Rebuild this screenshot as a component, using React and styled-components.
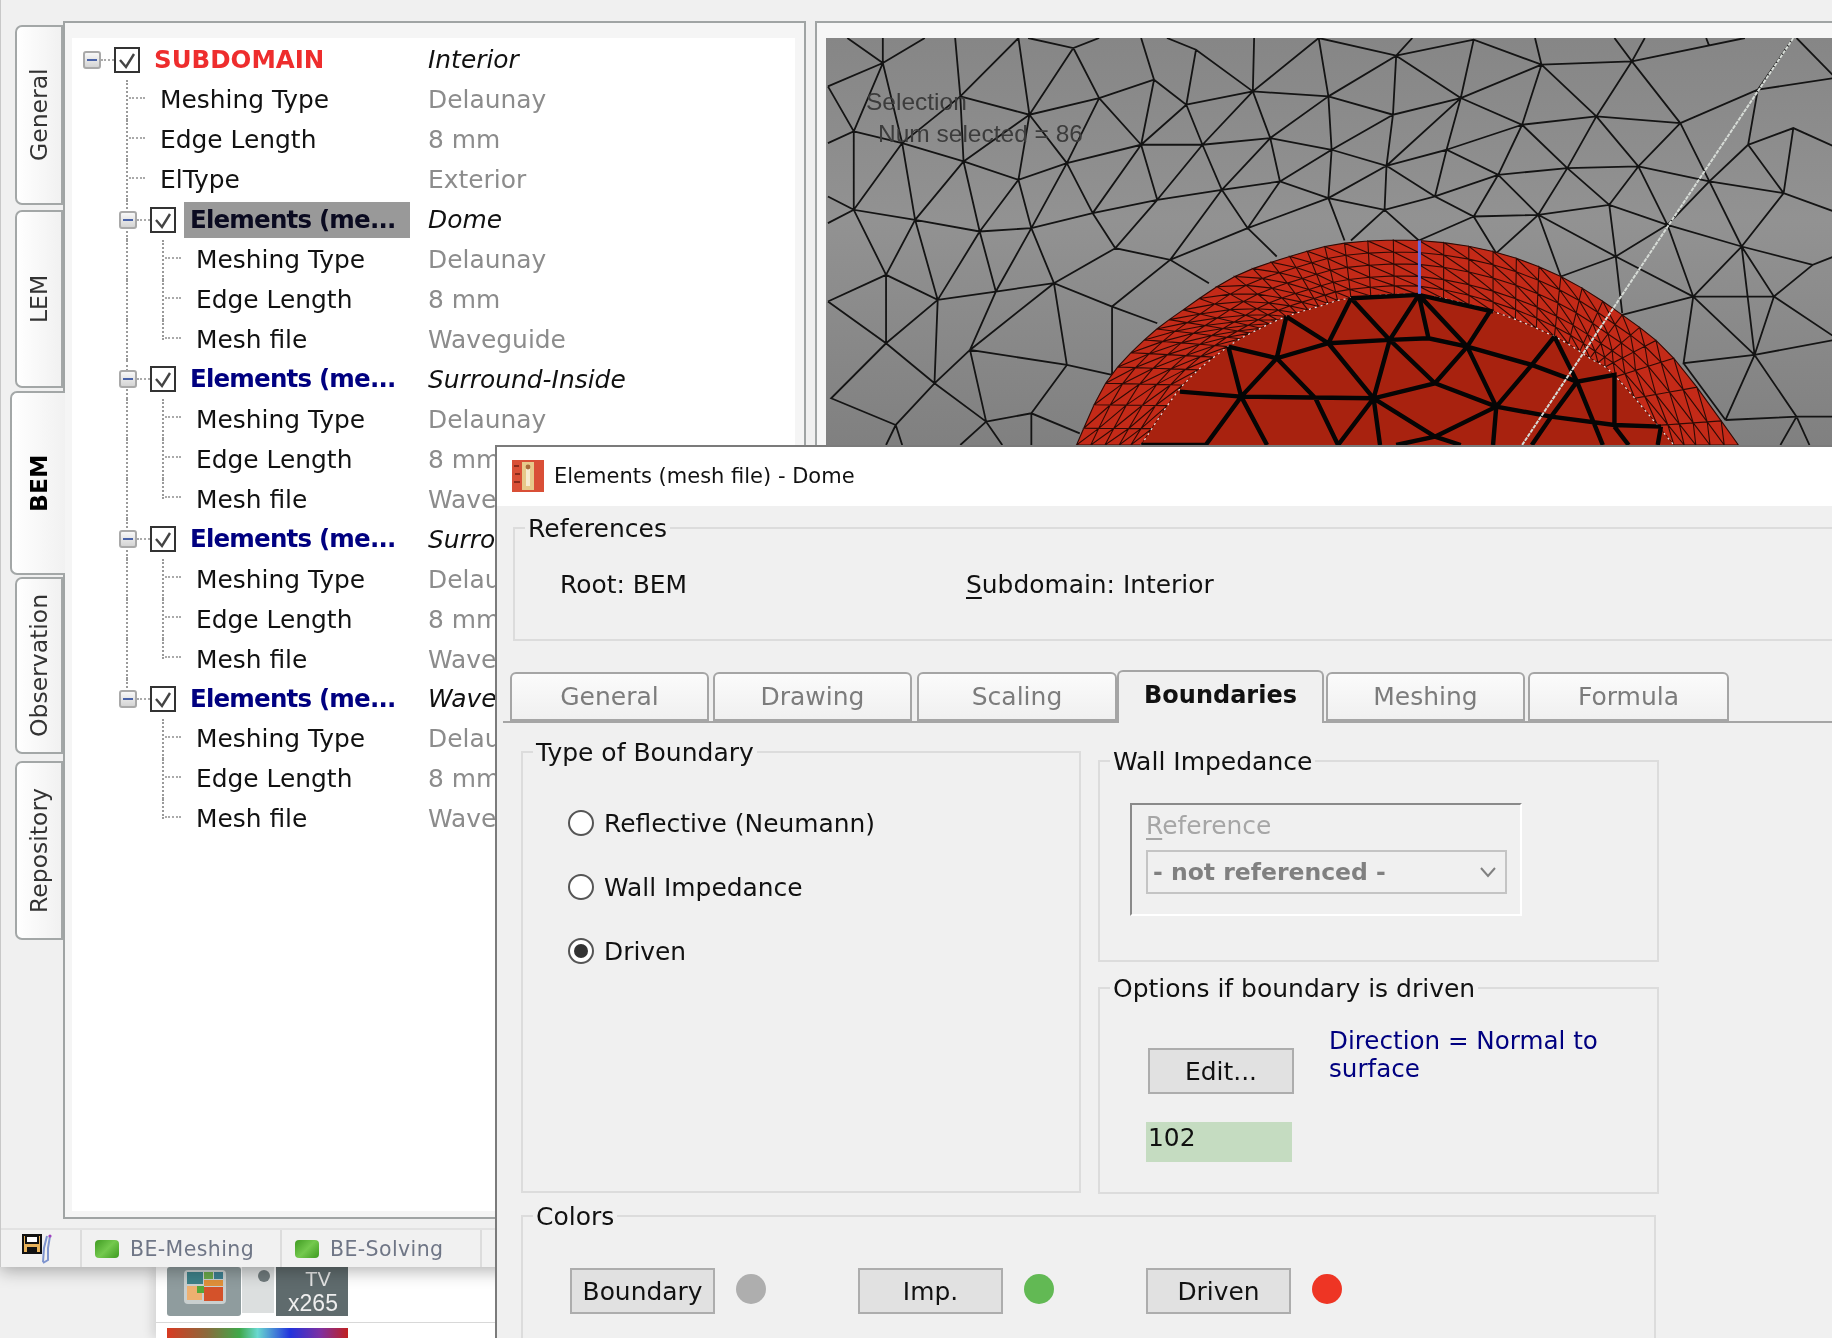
import styled, { createGlobalStyle } from "styled-components";

const GlobalStyle = createGlobalStyle`
  html, body { margin: 0; padding: 0; background: #f0f0f0; }
  body { font-family: "DejaVu Sans", "Liberation Sans", sans-serif; font-size: 24.9px; color: #111; }
`;

const Page = styled.div`
  position: relative;
  width: 1832px;
  height: 1338px;
  overflow: hidden;
  background: #f0f0f0;
  filter: blur(0.45px);
`;

/* main window behind the dialog */
const MainWindow = styled.div`
  position: relative;
  z-index: 1;
  height: 1267px;
  box-sizing: border-box;
  display: flex;
  flex-direction: column;
  background: #f0f0f0;
  border-left: 1px solid #c8c8c8;
  box-shadow: 0 4px 16px rgba(0, 0, 0, 0.3);
`;
const Body = styled.div`
  display: flex;
  height: 1200px;
  margin-top: 21px;
`;
const SideTabs = styled.div`
  width: 62px;
  flex: none;
  padding-top: 4px;
  display: flex;
  flex-direction: column;
  align-items: flex-end;
`;
const SideTab = styled.div`
  box-sizing: border-box;
  position: relative;
  z-index: ${(p) => (p.$active ? 2 : 0)};
  width: ${(p) => (p.$active ? "55px" : "48px")};
  height: ${(p) => p.$h}px;
  margin-top: ${(p) => p.$gap}px;
  margin-right: ${(p) => (p.$active ? "-2px" : "0")};
  display: flex;
  align-items: center;
  justify-content: center;
  writing-mode: vertical-rl;
  transform: rotate(180deg);
  font-size: 23.5px;
  font-weight: ${(p) => (p.$active ? 700 : 400)};
  color: ${(p) => (p.$active ? "#000" : "#333")};
  background: linear-gradient(to left, #ffffff, #f1f1f1);
  border: 2px solid #a3a7a7;
  border-left: ${(p) => (p.$active ? "none" : "2px solid #a3a7a7")};
  border-radius: 0 7px 7px 0;
`;
const TreePanel = styled.div`
  box-sizing: border-box;
  width: 743px;
  flex: none;
  padding: 15px 9px 6px 7px;
  background: #f5f5f5;
  border: 2px solid #a0a4a4;
`;
const Tree = styled.div`
  height: 100%;
  box-sizing: border-box;
  background: #fff;
  padding-top: 2px;
`;
const Row = styled.div`
  position: relative;
  display: grid;
  grid-template-columns: 356px 1fr;
  align-items: center;
  justify-items: start;
  height: 39.95px;
  &::before {
    content: "";
    display: ${(p) => (p.$trunk ? "block" : "none")};
    position: absolute;
    left: 54px;
    top: 0;
    bottom: ${(p) => (p.$trunk === "half" ? "20px" : "0")};
    border-left: 2px dotted #9a9a9a;
  }
  &::after {
    content: "";
    display: ${(p) => (p.$twig ? "block" : "none")};
    position: absolute;
    left: 90px;
    top: 0;
    bottom: ${(p) => (p.$twig === "half" ? "20px" : "0")};
    border-left: 2px dotted #9a9a9a;
  }
`;
const NameCell = styled.div`
  display: flex;
  align-items: center;
  position: relative;
  z-index: 1;
  padding-left: ${(p) => p.$indent}px;
`;
const Expander = styled.span`
  box-sizing: border-box;
  width: 18px;
  height: 18px;
  flex: none;
  display: flex;
  align-items: center;
  justify-content: center;
  background: linear-gradient(#f8f8f8, #d4d4d4);
  border: 2px solid #a9a9a9;
  border-radius: 3px;
  &::before {
    content: "";
    width: 10px;
    height: 2px;
    background: #4a63a8;
  }
`;
const Dash = styled.span`
  width: ${(p) => p.$w}px;
  flex: none;
  border-top: 2px dotted #aaa;
`;
const LeafDash = styled.span`
  position: absolute;
  left: ${(p) => p.$left}px;
  top: 17px;
  width: 16px;
  border-top: 2px dotted #aaa;
`;
const CheckBox = styled.span`
  box-sizing: border-box;
  width: 26px;
  height: 26px;
  flex: none;
  display: flex;
  align-items: center;
  justify-content: center;
  background: #fff;
  border: 2px solid #333;
`;
const NodeName = styled.span`
  box-sizing: border-box;
  font-size: 24.5px;
  font-weight: 700;
  white-space: nowrap;
  letter-spacing: ${(p) => (p.$root ? "0" : "-0.8px")};
  margin-left: ${(p) => (p.$root ? "14px" : "8px")};
  padding-left: ${(p) => (p.$root ? "0" : "6px")};
  width: ${(p) => (p.$root ? "auto" : "226px")};
  height: 36px;
  line-height: 36px;
  color: ${(p) => (p.$root ? "#ee2d2d" : p.$selected ? "#0a0a20" : "#000080")};
  background: ${(p) => (p.$selected ? "#999" : "transparent")};
`;
const LeafName = styled.span`
  white-space: nowrap;
  color: #111;
`;
const Value = styled.span`
  white-space: nowrap;
  font-style: ${(p) => (p.$node ? "italic" : "normal")};
  color: ${(p) => (p.$node ? "#111" : "#8c8c8c")};
`;
const GraphicPanel = styled.div`
  flex: 1;
  margin-left: 9px;
  padding: 15px 0 0 9px;
  background: #f6f6f6;
  border-top: 2px solid #a0a4a4;
  border-left: 2px solid #a0a4a4;
  overflow: hidden;
`;
const MeshView = styled.div`
  position: relative;
  width: 1008px;
  height: 407px;
  background: linear-gradient(#868686, #929292 45%, #808080);
`;
const MeshCaption = styled.div`
  position: absolute;
  left: ${(p) => p.$x}px;
  top: ${(p) => p.$y}px;
  font-family: "Liberation Sans", sans-serif;
  font-size: 24.5px;
  color: #3c3c3c;
  white-space: nowrap;
`;

const StatusBar = styled.div`
  margin-top: 9px;
  height: 37px;
  display: flex;
  align-items: center;
  border-top: 2px solid #e2e2e2;
  background: #f1f1f1;
`;
const StatusCell = styled.div`
  box-sizing: border-box;
  height: 100%;
  width: ${(p) => p.$w}px;
  flex: none;
  display: flex;
  align-items: center;
  gap: 11px;
  padding-left: ${(p) => p.$pad}px;
  border-right: 2px solid #dcdcdc;
  font-size: 20.5px;
  letter-spacing: 0.4px;
  color: #6f7686;
`;
const Led = styled.span`
  width: 24px;
  height: 18px;
  border-radius: 4px;
  background: linear-gradient(135deg, #3f9b22, #74c94e 50%, #3c9a1f);
`;

/* bit of the window lying further back */
const BackWindow = styled.div`
  margin-left: 156px;
  height: 71px;
  box-sizing: border-box;
  padding-left: 11px;
  background: #fff;
  box-shadow: -4px 0 10px rgba(0, 0, 0, 0.12);
`;
const Thumb = styled.svg`
  display: block;
  width: 181px;
  height: 50px;
`;
const ThumbRule = styled.div`
  height: 1px;
  margin: 5px 0 5px -11px;
  background: #d8d8d8;
`;
const RainbowThumb = styled.div`
  width: 181px;
  height: 10px;
  background: linear-gradient(to right, #d83a22, #8b6a3c 22%, #3fa84a 40%, #69d8d0 50%, #2233dd 68%, #8030a0 85%, #c02020);
`;

/* dialog */
const Dialog = styled.div`
  position: absolute;
  z-index: 2;
  left: 495px;
  top: 445px;
  right: 0;
  bottom: 0;
  box-sizing: border-box;
  background: #f0f0f0;
  border-left: 2px solid #7b7b7b;
  border-top: 2px solid #7b7b7b;
`;
const TitleBar = styled.div`
  height: 59px;
  box-sizing: border-box;
  display: flex;
  align-items: center;
  gap: 10px;
  padding: 0 0 2px 15px;
  background: #fff;
  font-size: 21px;
`;
const Group = styled.div`
  position: relative;
  box-sizing: border-box;
  width: ${(p) => p.$w}px;
  height: ${(p) => p.$h}px;
  border: 2px solid #dcdcdc;
`;
const Legend = styled.span`
  position: absolute;
  left: 10px;
  top: -14px;
  padding: 0 3px;
  line-height: 28px;
  font-size: 25px;
  background: #f0f0f0;
  white-space: nowrap;
`;
const RefSlot = styled.div`
  padding: 21px 0 0 16px;
`;
const RefRow = styled.div`
  display: flex;
  padding: 42px 0 0 45px;
  line-height: 28px;
`;
const RefText = styled.span`
  width: ${(p) => p.$w}px;
  flex: none;
`;
const Accel = styled.span`
  text-decoration: underline;
  text-underline-offset: 4px;
`;
const TabBar = styled.div`
  display: flex;
  align-items: flex-end;
  margin: 27px 0 0 6px;
  padding-left: 7px;
  height: 53px;
  border-bottom: 2px solid #a5a5a5;
`;
const Tab = styled.div`
  box-sizing: border-box;
  width: ${(p) => p.$w}px;
  height: ${(p) => (p.$active ? "53px" : "49px")};
  margin-right: ${(p) => p.$gap}px;
  margin-bottom: ${(p) => (p.$active ? "-2px" : "0")};
  padding-bottom: ${(p) => (p.$active ? "6px" : "1px")};
  display: flex;
  align-items: center;
  justify-content: center;
  font-weight: ${(p) => (p.$active ? 700 : 400)};
  font-size: ${(p) => (p.$active ? "24px" : "25px")};
  color: ${(p) => (p.$active ? "#111" : "#7c7c7c")};
  background: ${(p) => (p.$active ? "#f0f0f0" : "linear-gradient(#fbfbfb, #f0f0f0)")};
  border: 2px solid #a5a5a5;
  border-bottom: ${(p) => (p.$active ? "none" : "2px solid #a5a5a5")};
  border-radius: 6px 6px 0 0;
`;
const TabBody = styled.div`
  display: grid;
  grid-template-columns: 560px 561px;
  column-gap: 17px;
  padding: 28px 0 0 24px;
`;
const RightColumn = styled.div`
  display: flex;
  flex-direction: column;
  gap: 25px;
  padding-top: 9px;
`;
const RadioList = styled.div`
  padding: 38px 0 0 45px;
`;
const RadioRow = styled.label`
  display: flex;
  align-items: center;
  gap: 10px;
  height: 64px;
`;
const RadioDot = styled.span`
  box-sizing: border-box;
  width: 26px;
  height: 26px;
  display: flex;
  align-items: center;
  justify-content: center;
  border-radius: 50%;
  background: #fff;
  border: 2px solid #555;
  &::before {
    content: "";
    display: ${(p) => (p.$on ? "block" : "none")};
    width: 14px;
    height: 14px;
    border-radius: 50%;
    background: #333;
  }
`;
const RefBox = styled.div`
  box-sizing: border-box;
  width: 392px;
  height: 113px;
  margin: 41px 0 0 30px;
  padding: 7px 0 0 14px;
  border-top: 2px solid #8a8a8a;
  border-left: 2px solid #8a8a8a;
  border-right: 2px solid #fff;
  border-bottom: 2px solid #fff;
`;
const RefLabel = styled.div`
  color: #a6a6a6;
  line-height: 28px;
  margin-bottom: 10px;
`;
const Combo = styled.div`
  box-sizing: border-box;
  width: 361px;
  height: 44px;
  display: flex;
  align-items: center;
  justify-content: space-between;
  padding: 0 8px 0 5px;
  border: 2px solid #c4c4c4;
  font-weight: 700;
  font-size: 23.5px;
  color: #808080;
`;
const DrivenRow = styled.div`
  display: flex;
  padding: 59px 0 0 46px;
`;
const DrivenLeft = styled.div`
  width: 148px;
  flex: none;
`;
const PushButton = styled.div`
  box-sizing: border-box;
  width: ${(p) => p.$w}px;
  height: 46px;
  flex: none;
  margin-left: ${(p) => p.$left || 0}px;
  display: flex;
  align-items: center;
  justify-content: center;
  background: #e1e1e1;
  border: 2px solid #adadad;
  color: #111;
`;
const ValueBox = styled.div`
  box-sizing: border-box;
  width: 146px;
  height: 40px;
  margin-top: 28px;
  padding-left: 2px;
  line-height: 32px;
  background: #c5dcc1;
`;
const Direction = styled.div`
  margin: -21px 0 0 35px;
  width: 310px;
  line-height: 28px;
  font-size: 24.6px;
  color: #000080;
`;
const ColorsRow = styled.div`
  display: flex;
  align-items: center;
  padding: 51px 0 0 47px;
`;
const Swatch = styled.span`
  width: 30px;
  height: 30px;
  flex: none;
  margin: 0 92px 4px 21px;
  border-radius: 50%;
  background: ${(p) => p.$color};
`;
const ColorsSlot = styled.div`
  padding: 21px 0 0 24px;
`;

// mesh traced from the picture, in its own stretched coordinates (see viewBox)
const SEGMENTS = `
10 260 95 190 160 115|40 115 95 190|95 115 95 190 50 395|95 190 125 430|10 260 50 395 10 430|50 395 125 430 220 485 305 540 380 490 495 435 590 435 695 415 790 450 875 498 968 450 1048 525 1155 505 1265 500 1375 545 1490 580 1568 635
215 290 322 345 430 295 515 240|207 115 215 290|305 115 215 290 125 430|215 290 220 485|322 345 220 485|322 345 305 540|322 345 380 490|430 295 380 490|430 295 495 435|515 240 495 435|515 240 565 315 495 435|565 315 590 435|580 150 565 315|495 115 515 240|305 115 322 345|320 115 390 145 430 115|390 145 322 345|390 145 430 295
535 115 580 150 668 275|670 115 668 275|770 115 668 275|668 275 565 315|668 275 590 435|668 275 695 415|668 275 785 290 885 345 990 295|785 290 695 415|785 290 790 450|885 345 790 450|885 345 875 498|990 295 875 498|990 295 968 450|990 295 1085 375 1200 350 1330 370|1085 375 968 450|1085 375 1048 525|1085 375 1155 505|1200 350 1155 505|1200 350 1265 500|1330 370 1265 500|1330 370 1375 545
770 115 890 168 1010 120 1115 195 1255 185 1430 115|770 115 785 290|915 115 890 168 885 345|890 168 785 290|890 168 990 295|1010 120 990 295|1105 115 1115 195 990 295|1115 195 1200 350|1115 195 1085 375|1228 115 1255 185 1275 115|1255 185 1200 350|1255 185 1330 370|1370 115 1375 140|1330 370 1450 270 1568 235|1450 270 1435 435 1505 385 1568 440|1505 385 1490 580|1435 435 1490 580|1435 435 1375 545|1510 115 1568 230|1450 270 1505 115
50 395 50 630 145 660 245 695 325 685 420 640 520 600 620 570 710 545 785 595 872 630 950 590 1010 650 1110 645 1220 615 1310 675 1425 740 1535 795 1568 770|10 670 50 630 10 590|125 430 50 630|125 430 145 660|220 485 145 660|220 485 245 695|305 540 245 695|305 540 325 685|380 490 325 685|380 490 420 640|495 435 420 640|495 435 520 600|590 435 520 600|590 435 620 570|695 415 620 570|695 415 710 545|790 450 710 545|790 450 785 595|875 498 785 595|875 498 872 630|875 498 950 590|968 450 950 590|1048 525 950 590|1048 525 1010 650|1048 525 1110 645|1155 505 1110 645|1155 505 1220 615|1265 500 1220 615|1265 500 1310 675|1375 545 1310 675|1375 545 1425 740|1490 580 1425 740
10 905 100 825 180 900 270 875 360 850 450 920 520 970|100 825 50 630|100 825 145 660|180 900 145 660|180 900 245 695|270 875 245 695|270 875 325 685|360 850 325 685|360 850 455 745 420 640|520 600 455 745 540 780 660 685|620 570 540 780|620 570 660 685 710 545|785 595 660 685 705 770|450 920 540 780 600 850|785 595 810 722|872 630 820 722|872 630 925 722 1010 650|1010 650 1045 760|1110 645 1045 760|1110 645 1145 830|1110 645 1230 770 1220 615|1310 675 1230 770 1145 830|1230 770 1240 940|1310 675 1350 890 1230 770|1425 740 1350 890|1425 740 1475 890 1350 890|1475 890 1535 795|1475 890 1568 1010|1425 740 1445 1065|1350 890 1240 945|1350 890 1335 1090 1445 1065 1568 1020|1350 890 1445 1065|1475 890 1445 1065 1400 1260|1335 1090 1400 1260|1445 1065 1510 1250 1400 1260|1510 1250 1568 1250|1510 1250 1485 1335|1510 1250 1530 1335
10 905 100 1030 175 1150 255 1265|100 825 100 1030|180 900 100 1030|180 900 175 1150|270 875 230 1050|360 850 230 1050 380 1095 450 1125|230 1050 175 1150|230 1050 255 1265|100 1030 15 1195 115 1275 175 1150|115 1275 125 1335|115 1275 100 1335|255 1265 325 1240 400 1300|380 1095 325 1240|360 850 380 1095|450 920 450 1125|255 1265 215 1335|255 1265 280 1335|325 1240 325 1335`;

const DOME_LINES = `820 895 925 885 1040 935|820 895 785 1030|820 895 880 1020|925 885 880 1020|925 885 940 1015|925 885 1000 1040|1035 935 1000 1040|720 950 705 1075|720 950 785 1030|630 1040 705 1075 785 1030 880 1020 940 1015 1000 1040 1100 1095 1170 1145 1228 1125 1228 1280|630 1040 650 1190|705 1075 650 1190|705 1075 765 1195|785 1030 855 1195|880 1020 855 1195|880 1020 950 1150|1000 1040 950 1150|1000 1040 1045 1220|1100 1095 1045 1220|1135 1010 1100 1095|1135 1010 1170 1145|555 1175 650 1190 855 1195 950 1150 1045 1220 1130 1250 1228 1275 1300 1280|650 1190 595 1335|650 1190 690 1335|765 1195 800 1335|855 1195 800 1335|855 1195 865 1335|855 1195 950 1310|950 1310 890 1335|950 1310 990 1335|1045 1220 950 1310|1045 1220 1040 1335|1130 1250 1100 1335|1170 1145 1130 1250|1170 1145 1210 1335|1228 1280 1250 1335|1300 1280 1295 1335|495 1335 595 1335`;

const OUTER = [[395,1335],[440,1150],[500,1020],[560,930],[640,830],[725,770],[810,730],[925,722],[1040,755],[1145,830],[1240,945],[1320,1075],[1420,1335]];
const INNER = [[495,1335],[560,1155],[630,1040],[680,985],[720,950],[770,920],[820,895],[925,885],[1040,935],[1135,1010],[1190,1075],[1230,1130],[1320,1335]];

const toPath = (text) =>
  text
    .trim()
    .split(/[|\n]/)
    .map((poly) => {
      const n = poly.trim().split(/\s+/);
      let d = "";
      for (let i = 0; i < n.length; i += 2) d += `${i ? "L" : "M"}${n[i]} ${n[i + 1]}`;
      return d;
    })
    .join("");

// catmull-rom, so the two dome arcs don't look faceted
const smooth = (pts, steps) => {
  const out = [];
  for (let i = 0; i < pts.length - 1; i++) {
    const p0 = pts[Math.max(i - 1, 0)];
    const p1 = pts[i];
    const p2 = pts[i + 1];
    const p3 = pts[Math.min(i + 2, pts.length - 1)];
    for (let s = 0; s < steps; s++) {
      const t = s / steps;
      const f = (a, b, c, d) =>
        0.5 * (2 * b + (c - a) * t + (2 * a - 5 * b + 4 * c - d) * t * t + (3 * b - a - 3 * c + d) * t * t * t);
      out.push([f(p0[0], p1[0], p2[0], p3[0]), f(p0[1], p1[1], p2[1], p3[1])]);
    }
  }
  out.push(pts[pts.length - 1]);
  return out;
};

const outerArc = smooth(OUTER, 6);
const innerArc = smooth(INNER, 6);
const line = (pts) => pts.map((p, i) => `${i ? "L" : "M"}${p[0].toFixed(1)} ${p[1].toFixed(1)}`).join("");

// little triangles of the surround band, coarser than the arcs themselves
const bandOuter = smooth(OUTER, 3);
const bandInner = smooth(INNER, 3);
const bandRings = [0, 0.22, 0.44, 0.66, 0.84, 1].map((k) =>
  bandOuter.map((p, i) => [p[0] + (bandInner[i][0] - p[0]) * k, p[1] + (bandInner[i][1] - p[1]) * k])
);
const bandPath = () => {
  let d = "";
  bandRings.forEach((ring, r) => {
    d += line(ring);
    if (r === 0) return;
    const prev = bandRings[r - 1];
    ring.forEach((p, i) => {
      d += `M${p[0].toFixed(1)} ${p[1].toFixed(1)}L${prev[i][0].toFixed(1)} ${prev[i][1].toFixed(1)}`;
      if (i + 1 < ring.length) d += `L${ring[i + 1][0].toFixed(1)} ${ring[i + 1][1].toFixed(1)}`;
    });
  });
  return d;
};

function Mesh() {
  return (
    <svg width="1008" height="407" viewBox="7 115 1561 1220" preserveAspectRatio="none" style={{ display: "block" }}>
      <path d={toPath(SEGMENTS)} fill="none" stroke="#141414" strokeWidth="1.8" vectorEffect="non-scaling-stroke" />
      <path d={line(outerArc) + "Z"} fill="#c42a18" />
      <path d={bandPath()} fill="none" stroke="#2e0a05" strokeWidth="1.1" vectorEffect="non-scaling-stroke" />
      <path d={line(innerArc) + "Z"} fill="#a8220f" />
      <path d={line(innerArc)} fill="none" stroke="#e8e8e8" strokeWidth="1.2" strokeDasharray="2 4" vectorEffect="non-scaling-stroke" />
      <path d={toPath(DOME_LINES)} fill="none" stroke="#050505" strokeWidth="4.4" vectorEffect="non-scaling-stroke" />
      <path d="M926 722L926 882" stroke="#6a6ae0" strokeWidth="3" vectorEffect="non-scaling-stroke" />
      <path d="M1505 115L1085 1335" stroke="#d6dbd6" strokeWidth="2" strokeDasharray="4 1" vectorEffect="non-scaling-stroke" />
    </svg>
  );
}

const Check = () => (
  <svg width="20" height="20" viewBox="0 0 20 20">
    <path d="M3 10l6 7 8-13" fill="none" stroke="#444" strokeWidth="2.4" />
  </svg>
);

const FloppyIcon = () => (
  <svg width="32" height="32" viewBox="0 0 32 32">
    <path d="M1 2h18v18H1z" fill="#e8b25a" stroke="#111" strokeWidth="2" />
    <path d="M4 3h12v7H4z" fill="#fff" stroke="#111" strokeWidth="2" />
    <path d="M5 14h10v5H5z" fill="#111" />
    <path d="M25 3l-3 12-1 14M28 3l-2 12v12l-5 3" fill="none" stroke="#7f95cf" strokeWidth="2" />
    <circle cx="28" cy="3" r="1.6" fill="#a040c0" />
  </svg>
);

const DialogIcon = () => (
  <svg width="32" height="32" viewBox="0 0 32 32">
    <rect width="32" height="32" fill="#d94f36" />
    <rect x="10" y="2" width="12" height="28" fill="#e7c98a" />
    <rect x="14" y="8" width="4" height="18" fill="#f6ecd0" />
    <circle cx="16" cy="7" r="2.4" fill="#a86a3a" />
    <path d="M2 6h5M3 14h5M2 22h6" stroke="#8a2a1a" strokeWidth="2" />
  </svg>
);

const TvThumb = () => (
  <Thumb viewBox="0 0 181 50">
    <rect width="74" height="49" rx="3" fill="#8f9c9e" />
    <rect x="17" y="3" width="42" height="34" rx="4" fill="#c9cfcf" />
    <rect x="20" y="5" width="16" height="12" fill="#3d8088" />
    <rect x="37" y="5" width="9" height="7" fill="#6aa84a" />
    <rect x="47" y="5" width="9" height="7" fill="#3d7f90" />
    <rect x="37" y="13" width="19" height="6" fill="#e0903a" />
    <rect x="20" y="19" width="15" height="14" fill="#eeb070" />
    <rect x="37" y="20" width="19" height="14" fill="#d4522a" />
    <rect x="30" y="19" width="7" height="7" fill="#53a83a" />
    <rect x="75" y="0" width="32" height="46" fill="#dcdfdf" />
    <circle cx="97" cy="9" r="6" fill="#6f7a7c" />
    <rect x="109" width="72" height="49" fill="#5f6b6d" />
    <text x="151" y="19" textAnchor="middle" fontFamily="Liberation Sans, sans-serif" fontSize="20" fill="#e6e6e6">TV</text>
    <text x="146" y="44" textAnchor="middle" fontFamily="Liberation Sans, sans-serif" fontSize="23" fill="#eeeeee">x265</text>
  </Thumb>
);

// what shows of the values left of the dialog's edge
const ELEMENTS = [
  { value: "Dome", selected: true, leaves: ["Delaunay", "8 mm", "Waveguide"] },
  { value: "Surround-Inside", leaves: ["Delaunay", "8 mm", "Wave"] },
  { value: "Surro", leaves: ["Delau", "8 mm", "Wave"] },
  { value: "Wave", leaves: ["Delau", "8 mm", "Wave"] },
];
const ROOT_LEAVES = [
  ["Meshing Type", "Delaunay"],
  ["Edge Length", "8 mm"],
  ["ElType", "Exterior"],
];
const LEAF_NAMES = ["Meshing Type", "Edge Length", "Mesh file"];
const SIDE_TABS = [
  { label: "General", h: 180, gap: 0 },
  { label: "LEM", h: 178, gap: 5 },
  { label: "BEM", h: 184, gap: 3, active: true },
  { label: "Observation", h: 177, gap: 2 },
  { label: "Repository", h: 179, gap: 7 },
];
const DIALOG_TABS = [
  { label: "General", w: 199, gap: 4 },
  { label: "Drawing", w: 199, gap: 5 },
  { label: "Scaling", w: 200, gap: 0 },
  { label: "Boundaries", w: 207, gap: 2, active: true },
  { label: "Meshing", w: 199, gap: 3 },
  { label: "Formula", w: 201, gap: 0 },
];

export default function App() {
  return (
    <Page>
      <GlobalStyle />
      <MainWindow>
        <Body>
          <SideTabs>
            {SIDE_TABS.map((t) => (
              <SideTab key={t.label} $h={t.h} $gap={t.gap} $active={t.active}>
                {t.label}
              </SideTab>
            ))}
          </SideTabs>
          <TreePanel>
            <Tree>
              <Row>
                <NameCell $indent={11}>
                  <Expander />
                  <Dash $w={13} />
                  <CheckBox><Check /></CheckBox>
                  <NodeName $root>SUBDOMAIN</NodeName>
                </NameCell>
                <Value $node>Interior</Value>
              </Row>
              {ROOT_LEAVES.map(([name, value]) => (
                <Row key={name} $trunk="full">
                  <LeafDash $left={57} />
                  <NameCell $indent={88}>
                    <LeafName>{name}</LeafName>
                  </NameCell>
                  <Value>{value}</Value>
                </Row>
              ))}
              {ELEMENTS.map((el, i) => {
                const last = i === ELEMENTS.length - 1;
                return (
                  <div key={el.value}>
                    <Row $trunk={last ? "half" : "full"}>
                      <NameCell $indent={47}>
                        <Expander />
                        <Dash $w={13} />
                        <CheckBox><Check /></CheckBox>
                        <NodeName $selected={el.selected}>Elements (me...</NodeName>
                      </NameCell>
                      <Value $node>{el.value}</Value>
                    </Row>
                    {el.leaves.map((leaf, j) => (
                      <Row key={LEAF_NAMES[j]} $trunk={last ? undefined : "full"} $twig={j === 2 ? "half" : "full"}>
                        <LeafDash $left={93} />
                        <NameCell $indent={124}>
                          <LeafName>{LEAF_NAMES[j]}</LeafName>
                        </NameCell>
                        <Value>{leaf}</Value>
                      </Row>
                    ))}
                  </div>
                );
              })}
            </Tree>
          </TreePanel>
          <GraphicPanel>
            <MeshView>
              <Mesh />
              <MeshCaption $x={40} $y={50}>Selection</MeshCaption>
              <MeshCaption $x={52} $y={82}>Num selected = 86</MeshCaption>
            </MeshView>
          </GraphicPanel>
        </Body>
        <StatusBar>
          <StatusCell $w={81} $pad={21}><FloppyIcon /></StatusCell>
          <StatusCell $w={200} $pad={13}><Led />BE-Meshing</StatusCell>
          <StatusCell $w={200} $pad={13}><Led />BE-Solving</StatusCell>
        </StatusBar>
      </MainWindow>

      <BackWindow>
        <TvThumb />
        <ThumbRule />
        <RainbowThumb />
      </BackWindow>

      <Dialog>
        <TitleBar>
          <DialogIcon />
          Elements (mesh file) - Dome
        </TitleBar>
        <RefSlot>
          <Group $w={1400} $h={114}>
            <Legend>References</Legend>
            <RefRow>
              <RefText $w={406}>Root: BEM</RefText>
              <RefText $w={500}><Accel>S</Accel>ubdomain: Interior</RefText>
            </RefRow>
          </Group>
        </RefSlot>
        <TabBar>
          {DIALOG_TABS.map((t) => (
            <Tab key={t.label} $w={t.w} $gap={t.gap} $active={t.active}>
              {t.label}
            </Tab>
          ))}
        </TabBar>
        <TabBody>
          <Group $w={560} $h={442}>
            <Legend>Type of Boundary</Legend>
            <RadioList>
              <RadioRow><RadioDot />Reflective (Neumann)</RadioRow>
              <RadioRow><RadioDot />Wall Impedance</RadioRow>
              <RadioRow><RadioDot $on />Driven</RadioRow>
            </RadioList>
          </Group>
          <RightColumn>
            <Group $w={561} $h={202}>
              <Legend>Wall Impedance</Legend>
              <RefBox>
                <RefLabel><Accel>R</Accel>eference</RefLabel>
                <Combo>
                  - not referenced -
                  <svg width="18" height="12" viewBox="0 0 18 12">
                    <path d="M2 2l7 8 7-8" fill="none" stroke="#808080" strokeWidth="2" />
                  </svg>
                </Combo>
              </RefBox>
            </Group>
            <Group $w={561} $h={207}>
              <Legend>Options if boundary is driven</Legend>
              <DrivenRow>
                <DrivenLeft>
                  <PushButton $w={146} $left={2}>Edit...</PushButton>
                  <ValueBox>102</ValueBox>
                </DrivenLeft>
                <Direction>Direction = Normal to surface</Direction>
              </DrivenRow>
            </Group>
          </RightColumn>
        </TabBody>
        <ColorsSlot>
          <Group $w={1135} $h={140}>
            <Legend>Colors</Legend>
            <ColorsRow>
              <PushButton $w={145}>Boundary</PushButton>
              <Swatch $color="#aeaeae" />
              <PushButton $w={145}>Imp.</PushButton>
              <Swatch $color="#62b954" />
              <PushButton $w={145}>Driven</PushButton>
              <Swatch $color="#ee3524" />
            </ColorsRow>
          </Group>
        </ColorsSlot>
      </Dialog>
    </Page>
  );
}
